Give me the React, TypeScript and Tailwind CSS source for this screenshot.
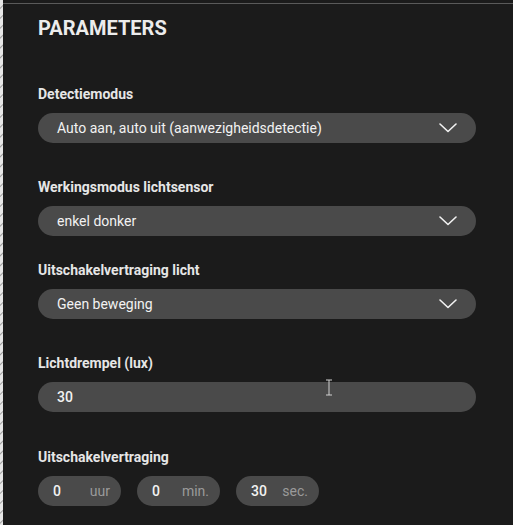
import React from "react";

const FONT = { fontFamily: "Roboto, 'Liberation Sans', sans-serif" };

function Chevron() {
  return (
    <svg width="18" height="10" viewBox="0 0 18 10" fill="none" className="shrink-0">
      <path d="M1 1l8 7.5L17 1" stroke="#f2f2f2" strokeWidth="1.6" strokeLinecap="round" strokeLinejoin="round" />
    </svg>
  );
}

function Label({ children, className = "" }: { children: React.ReactNode; className?: string }) {
  return <div className={`text-[14px] leading-[18px] font-bold text-[#e6e6e6] ${className}`}>{children}</div>;
}

function Select({ value }: { value: string }) {
  return (
    <div className="mt-[10px] flex h-[30px] items-center justify-between rounded-full bg-[#4a4a4a] pl-[19px] pr-[19px]">
      <span className="text-[14px] text-[#f2f2f2]">{value}</span>
      <Chevron />
    </div>
  );
}

function UnitInput({ value, unit }: { value: string; unit: string }) {
  return (
    <div className="flex h-[30px] w-[83px] items-center justify-between rounded-full bg-[#4a4a4a] pl-[15px] pr-[11px]">
      <span className="text-[14px] font-medium text-[#f2f2f2]">{value}</span>
      <span className="text-[14px] text-[#9a9a9a]">{unit}</span>
    </div>
  );
}

export default function App() {
  return (
    <div className="flex h-[525px] w-[513px] overflow-hidden bg-[#1b1b1b]" style={FONT}>
      <div className="w-[3px] shrink-0 bg-[repeating-linear-gradient(135deg,#e6e6e6_0px,#e6e6e6_5px,#9c9c9c_6px,#e6e6e6_7px)]" />
      <div className="relative flex-1">
        <div className="mt-[3px] h-px bg-[#5a5a5a]" />
        <div className="pl-[35px] pr-[37px]">
          <h1 className="mt-[12px] text-[20px] leading-[24px] font-bold text-[#ececec]">PARAMETERS</h1>

          <Label className="mt-[45px]">Detectiemodus</Label>
          <Select value="Auto aan, auto uit (aanwezigheidsdetectie)" />

          <Label className="mt-[35px]">Werkingsmodus lichtsensor</Label>
          <Select value="enkel donker" />

          <Label className="mt-[25px]">Uitschakelvertraging licht</Label>
          <Select value="Geen beweging" />

          <Label className="mt-[35px]">Lichtdrempel (lux)</Label>
          <div className="mt-[10px] flex h-[30px] items-center rounded-full bg-[#4a4a4a] pl-[19px]">
            <span className="text-[14px] font-medium text-[#f2f2f2]">30</span>
          </div>

          <Label className="mt-[36px]">Uitschakelvertraging</Label>
          <div className="mt-[10px] flex gap-[16px]">
            <UnitInput value="0" unit="uur" />
            <UnitInput value="0" unit="min." />
            <UnitInput value="30" unit="sec." />
          </div>
        </div>

        <svg className="absolute left-[322px] top-[379px]" width="8" height="17" viewBox="0 0 8 17" fill="none">
          <path d="M1 1h6M4 1v15M1 16h6" stroke="#d0d0d0" strokeWidth="1" />
        </svg>
      </div>
    </div>
  );
}
